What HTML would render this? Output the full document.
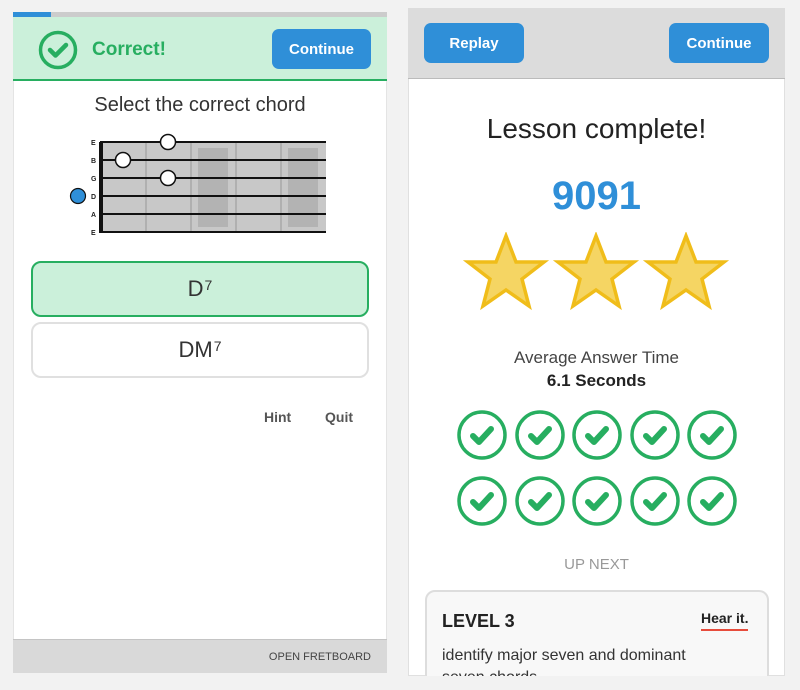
<!DOCTYPE html>
<html><head><style>
*{margin:0;padding:0;box-sizing:border-box}
body{width:800px;height:690px;background:#f2f2f2;position:relative;overflow:hidden;font-family:"Liberation Sans",sans-serif;color:#333}
.abs{position:absolute}
.btn{position:absolute;background:#2f8fd8;color:#fff;font-weight:bold;font-size:15px;border-radius:7px;display:flex;align-items:center;justify-content:center}
.c{text-align:center}
.opt{display:flex;align-items:center;justify-content:center;font-size:22px}
.opt sup{font-size:14px;position:relative;top:-4px;margin-left:1px}
</style></head><body>
<div class="abs" style="left:13px;top:12px;width:374px;height:661px;background:#fff;border:1px solid #e4e4e4"></div>
<div class="abs" style="left:13px;top:12px;width:374px;height:5px;background:#cccccc"></div>
<div class="abs" style="left:13px;top:12px;width:38px;height:5px;background:#2f8fd8"></div>
<div class="abs" style="left:13px;top:17px;width:374px;height:64px;background:#cbf0da;border-bottom:2px solid #27ae60"></div>
<svg class="abs" style="left:36px;top:28px" width="44" height="44" viewBox="0 0 44 44"><circle cx="22" cy="22" r="17.5" fill="none" stroke="#27ae60" stroke-width="3.5"/><path d="M14 22 L19.5 27.5 L30 17" fill="none" stroke="#27ae60" stroke-width="4.5" stroke-linecap="round" stroke-linejoin="round"/></svg>
<div class="abs" style="left:92px;top:39px;font-size:19px;font-weight:bold;color:#27ae60">Correct!</div>
<div class="btn" style="left:272px;top:29px;width:99px;height:40px">Continue</div>
<div class="abs c" style="left:13px;top:94px;width:374px;font-size:20px;color:#333">Select the correct chord</div>
<svg class="abs" style="left:60px;top:130px" width="280" height="112">
<rect x="40" y="12" width="226" height="90" fill="#c8c8c8"/>
<rect x="138" y="18" width="30" height="79" fill="#b3b3b3"/>
<rect x="228" y="18" width="30" height="79" fill="#b3b3b3"/>
<g stroke="#999" stroke-width="1"><line x1="86" y1="12" x2="86" y2="102"/><line x1="131" y1="12" x2="131" y2="102"/><line x1="176" y1="12" x2="176" y2="102"/><line x1="221" y1="12" x2="221" y2="102"/></g>
<g stroke="#111" stroke-width="2"><line x1="40" y1="12" x2="266" y2="12"/><line x1="40" y1="30" x2="266" y2="30"/><line x1="40" y1="48" x2="266" y2="48"/><line x1="40" y1="66" x2="266" y2="66"/><line x1="40" y1="84" x2="266" y2="84"/><line x1="40" y1="102" x2="266" y2="102"/></g>
<rect x="39" y="12" width="4" height="91" fill="#111"/>
<g font-size="7" font-weight="bold" fill="#222" font-family="Liberation Sans"><text x="31" y="15">E</text><text x="31" y="33">B</text><text x="31" y="51">G</text><text x="31" y="69">D</text><text x="31" y="87">A</text><text x="31" y="105">E</text></g>
<g fill="#fff" stroke="#111" stroke-width="1.5"><circle cx="108" cy="12" r="7.5"/><circle cx="63" cy="30" r="7.5"/><circle cx="108" cy="48" r="7.5"/></g>
<circle cx="18" cy="66" r="7.5" fill="#2f8fd8" stroke="#111" stroke-width="1.2"/>
</svg>
<div class="abs opt" style="left:31px;top:261px;width:338px;height:56px;background:#cbf0da;border:2px solid #27ae60;border-radius:10px">D<sup>7</sup></div>
<div class="abs opt" style="left:31px;top:322px;width:338px;height:56px;background:#fff;border:2px solid #e0e0e0;border-radius:10px">DM<sup>7</sup></div>
<div class="abs" style="left:264px;top:409px;font-size:14px;font-weight:bold;color:#555">Hint</div>
<div class="abs" style="left:325px;top:409px;font-size:14px;font-weight:bold;color:#555">Quit</div>
<div class="abs" style="left:13px;top:639px;width:374px;height:34px;background:#d9d9d9;border-top:1px solid #c4c4c4"></div>
<div class="abs" style="left:200px;top:651px;width:171px;text-align:right;font-size:11px;color:#444">OPEN FRETBOARD</div>
<div class="abs" style="left:408px;top:8px;width:377px;height:668px;background:#fff;border:1px solid #e0e0e0"></div>
<div class="abs" style="left:408px;top:8px;width:377px;height:71px;background:#dcdcdc;border-bottom:1px solid #bbb"></div>
<div class="btn" style="left:424px;top:23px;width:100px;height:40px">Replay</div>
<div class="btn" style="left:669px;top:23px;width:100px;height:40px">Continue</div>
<div class="abs c" style="left:408px;top:113px;width:377px;font-size:28px;color:#222">Lesson complete!</div>
<div class="abs c" style="left:408px;top:174px;width:377px;font-size:40px;font-weight:bold;color:#2f8fd8">9091</div>
<svg class="abs" style="left:460px;top:232px" width="280" height="80">
<defs><polygon id="st" points="40,4 50,30 78,30 56,47 63,74 40,58 17,74 24,47 2,30 30,30" fill="#f5d563" stroke="#f0bd1a" stroke-width="3.5"/></defs>
<use href="#st" x="6" y="0"/><use href="#st" x="96" y="0"/><use href="#st" x="186" y="0"/>
</svg>
<div class="abs c" style="left:408px;top:348px;width:377px;font-size:17px;color:#444">Average Answer Time</div>
<div class="abs c" style="left:408px;top:371px;width:377px;font-size:17px;font-weight:bold;color:#222">6.1 Seconds</div>
<svg class="abs" style="left:455px;top:408px" width="290" height="122">
<defs><g id="ck"><circle cx="0" cy="0" r="23" fill="none" stroke="#27ae60" stroke-width="3.5"/><path d="M-9 1 L-3 7 L9 -6" fill="none" stroke="#27ae60" stroke-width="6" stroke-linecap="round" stroke-linejoin="round"/></g></defs>
<use href="#ck" x="27" y="27"/><use href="#ck" x="85" y="27"/><use href="#ck" x="142" y="27"/><use href="#ck" x="200" y="27"/><use href="#ck" x="257" y="27"/>
<use href="#ck" x="27" y="93"/><use href="#ck" x="85" y="93"/><use href="#ck" x="142" y="93"/><use href="#ck" x="200" y="93"/><use href="#ck" x="257" y="93"/>
</svg>
<div class="abs c" style="left:408px;top:556px;width:377px;font-size:15px;color:#999">UP NEXT</div>
<div class="abs" style="left:425px;top:590px;width:344px;height:100px;background:#f8f8f8;border:2px solid #ddd;border-radius:10px;overflow:hidden">
<div class="abs" style="left:15px;top:19px;font-size:18px;font-weight:bold;color:#222">LEVEL 3</div>
<div class="abs" style="left:274px;top:18px;font-size:14px;font-weight:bold;color:#222;border-bottom:2px solid #e74c3c;padding-bottom:3px">Hear it.</div>
<div class="abs" style="left:15px;top:53px;width:280px;font-size:16px;color:#333;line-height:22px">identify major seven and dominant seven chords</div>
</div>
<div class="abs" style="left:400px;top:676px;width:400px;height:14px;background:#f2f2f2"></div>
</body></html>
